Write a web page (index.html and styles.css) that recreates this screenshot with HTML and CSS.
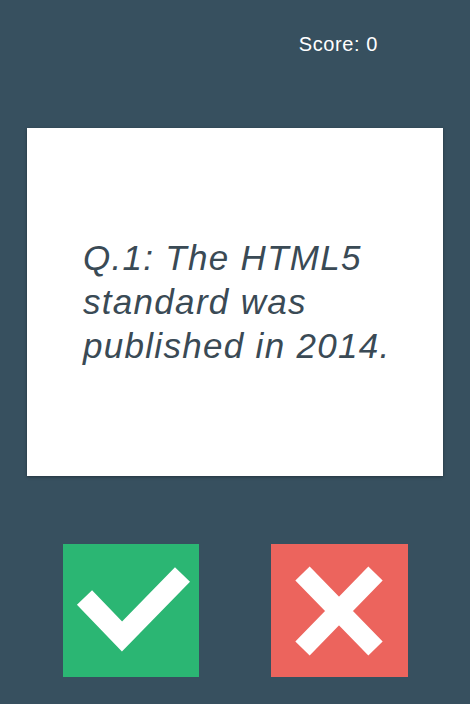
FILE: index.html
```html
<!DOCTYPE html>
<html>
<head>
<meta charset="utf-8">
<link rel="stylesheet" href="styles.css">
</head>
<body>
<div class="app">
  <header class="top">
    <span class="score">Score: 0</span>
  </header>
  <main class="card">
    <p class="question">Q.1: The HTML5 standard was published in 2014.</p>
  </main>
  <div class="answers">
    <button class="btn btn-yes" aria-label="True">
      <svg width="136" height="133" viewBox="0 0 136 133">
        <path d="M21.5 53.5 L59 92.5 L119.5 30.5" fill="none" stroke="#fff" stroke-width="21" stroke-linecap="butt" stroke-linejoin="miter"/>
      </svg>
    </button>
    <button class="btn btn-no" aria-label="False">
      <svg width="137" height="133" viewBox="0 0 137 133">
        <path d="M31.5 29.5 L104.5 104.5 M104.5 29.5 L31.5 104.5" fill="none" stroke="#fff" stroke-width="20"/>
      </svg>
    </button>
  </div>
</div>
</body>
</html>
```
FILE: styles.css
```css
html, body {
  margin: 0;
  padding: 0;
  background: #37505f;
  width: 470px;
  height: 704px;
  overflow: hidden;
}
.app {
  font-family: "Liberation Sans", Arial, sans-serif;
  display: flex;
  flex-direction: column;
}
.top {
  display: flex;
  justify-content: flex-end;
  padding: 32px 92px 0 0;
  height: 96px;
  box-sizing: border-box;
}
.score {
  color: #ffffff;
  font-size: 20px;
  line-height: 24px;
  letter-spacing: 0.6px;
}
.card {
  margin: 32px 0 0 27px;
  width: 416px;
  height: 348px;
  background: #ffffff;
  box-shadow: 0 1px 3px rgba(0,0,0,0.35);
  display: flex;
  align-items: center;
  box-sizing: border-box;
  padding: 0 30px 0 56px;
}
.question {
  margin: 0;
  font-style: italic;
  font-size: 35px;
  line-height: 44px;
  letter-spacing: 1.3px;
  color: #3a4a55;
}
.answers {
  display: flex;
  margin-top: 68px;
  padding-left: 63px;
  gap: 72px;
}
.btn {
  border: 0;
  padding: 0;
  margin: 0;
  display: block;
  height: 133px;
  cursor: pointer;
}
.btn svg { display: block; }
.btn-yes {
  width: 136px;
  background: #2bb673;
}
.btn-no {
  width: 137px;
  background: #ec645d;
}
```
